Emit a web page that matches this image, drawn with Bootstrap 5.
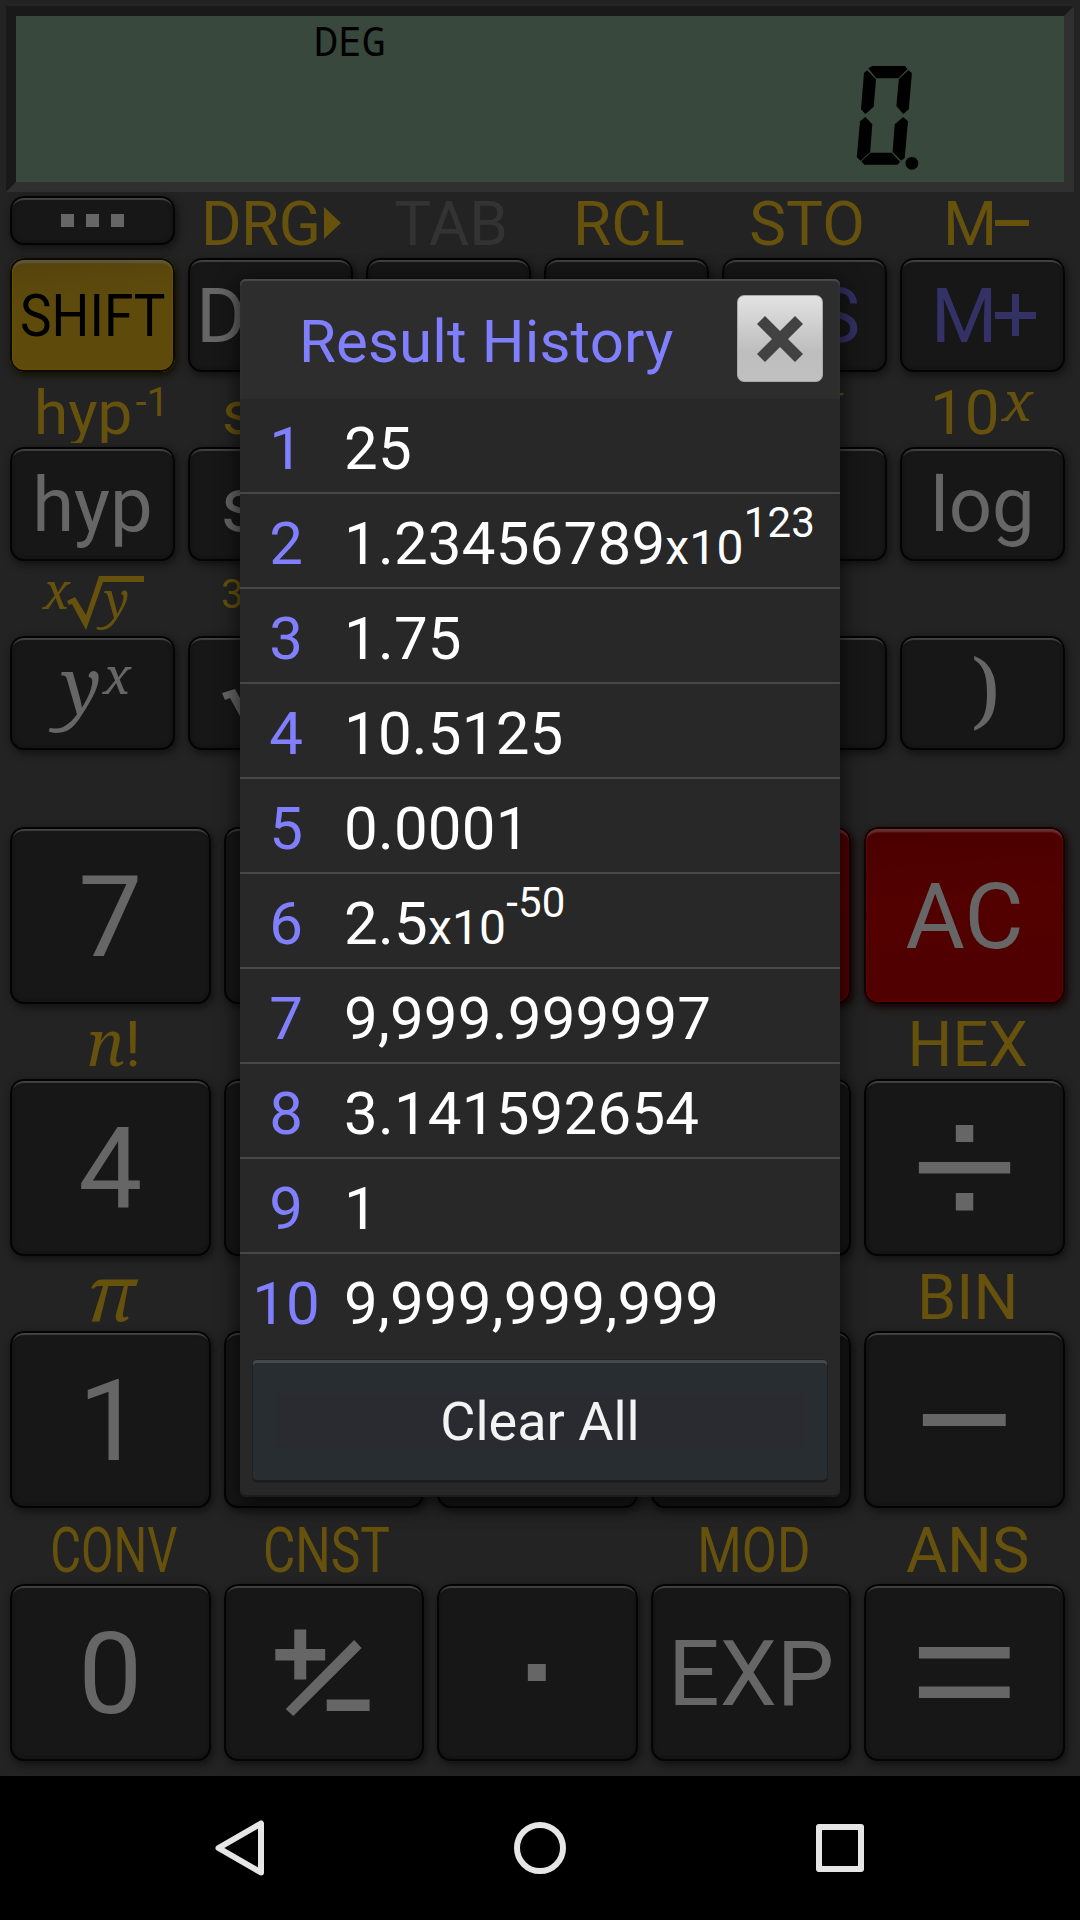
<!DOCTYPE html>
<html lang="en">
<head>
<meta charset="utf-8">
<meta name="viewport" content="width=device-width, initial-scale=1">
<title>Calculator</title>
<link href="https://cdn.jsdelivr.net/npm/bootstrap@5.3.0/dist/css/bootstrap.min.css" rel="stylesheet">
<style>
:root{--gold:#66520c;--ink:#666;--face:#171717}
body{width:1080px;height:1920px;background:#232323;font-family:Roboto,"Liberation Sans",sans-serif;overflow:hidden}
svg{display:block;overflow:visible}
.calc{height:1776px}
.lcd{margin:6px 6px 0;height:186px;border:10px solid;border-color:#191919 #303030 #303030 #191919;background:#38483c}
.krow{display:flex;gap:13px;padding:0 15px 0 10px}
.krow>*{flex:1 1 0;min-width:0}
.key{position:static;border:0;border-radius:14px;padding:0;height:114px;line-height:117px;font-size:76px;color:var(--ink);background:var(--face);white-space:nowrap;
 box-shadow:inset 0 0 0 2px #040404,inset 0 4px 1px 0 #424242,inset 0 0 3px 3px #131313,2px 3px 7px 1px #141414;text-align:center;cursor:pointer}
.key svg{width:100%;height:100%}
.big{height:177px;line-height:181px;font-size:114px}
.mid{font-size:91px}
.key.menu{height:49px;margin-top:4px}
.key.gold{background:linear-gradient(175deg,#54430d,#5e4b0c 40%,#5e4a0a);color:#000;font-size:59px;line-height:115px;
 box-shadow:inset 0 0 0 2px #0c0a02,inset 0 5px 2px 0 #5f573c,inset 0 0 2px 3px #684f04,2px 3px 7px 1px #141205}
.key.red{background:linear-gradient(175deg,#4a0000,#520000 40%,#500000);
 box-shadow:inset 0 0 0 2px #120000,inset 0 5px 2px 0 #6a3232,inset 0 0 2px 3px #600000,2px 3px 7px 1px #160606}
.leg{height:71px;margin-bottom:4px;overflow:hidden;line-height:82px;font-size:62px;color:var(--gold);text-align:center;white-space:nowrap}
.leg svg{width:100%;height:100%;overflow:hidden}
.legtop{height:66px;line-height:64px;margin:0;text-indent:5px}
.legbig{font-size:63px;line-height:83px;text-indent:6px}
.narrow{display:inline-block;transform:scaleX(var(--sx));margin:0 -40px;text-indent:0}
.raise{font-size:40px;position:relative;top:-18px;line-height:1;margin-left:3px}
.it{font-family:"Noto Serif","Droid Serif","DejaVu Serif",serif;font-style:italic}
.dlg{position:absolute;left:240px;top:279px;width:600px;height:1218px;background:#282828;border-radius:6px;box-shadow:inset 0 2px 1px #4a4a4a,inset 0 -2px 1px #1c1c1c,0 4px 22px 2px rgba(0,0,0,.65);color:#fff;font-size:60px}
.dhead{height:120px;padding:0 17px 0 59px;background:#2d2d2d;color:#8080ff;border-radius:6px 6px 0 0;box-shadow:inset 0 2px 1px #4a4a4a}
.dhead h1{font-size:60px;font-weight:400;line-height:116px;padding-top:5px;margin:0;letter-spacing:.12px}
.xbtn{width:86px;height:87px;margin-top:-1px;border-radius:7px;border:1px solid #a8a8a8;background:linear-gradient(#e2e2e2,#bebebe 65%,#c0c0c0);padding:0}
.hist{height:95px;line-height:99px;border-bottom:2px solid #484848;margin:0}
.hist:last-child{border-color:transparent}
.num{width:92px;text-align:center;color:#8080ff}
.val{padding-left:12px;white-space:nowrap;letter-spacing:.2px}
.ten{font-size:48px}
.pow{font-size:42px;position:relative;top:-27px;line-height:1}
.clr{display:block;width:576px;height:124px;margin:10px 12px 0;border:0;border-radius:5px;padding:0;font-size:54px;line-height:123px;color:#f3f3f3;background:linear-gradient(#292b30,#292b30) center/530px 54px no-repeat #282d31;box-shadow:inset 0 0 0 1px #1f2123,inset 0 4px 0 #46494c,inset 0 -3px 0 #1b1c1d}
.navb{height:144px;background:#000}
</style>
<script src="https://cdn.jsdelivr.net/npm/bootstrap@5.3.0/dist/js/bootstrap.bundle.min.js"></script>
</head>
<body>
<main class="calc d-flex flex-column">
  <div class="lcd">
    <svg width="1048" height="166" viewBox="16 16 1048 166" role="img" aria-label="0.">
      <text x="314" y="56" font-size="40" textLength="72" lengthAdjust="spacingAndGlyphs" font-family="'Noto Sans Mono','DejaVu Sans Mono',monospace">DEG</text>
      <path d="M868.2 68.3 872.3 66H905L907.4 69 898.5 78.3H876.4ZM867.1 70.3 876 79.3 873.7 106.7 865.4 114 861 109.3 864 73ZM908.5 70 911.9 73.3 908.8 109.3 903.3 114 896.4 106 898.8 79.3ZM865.4 117 872.3 124.3 870.2 152 860.6 160.7 856.8 157.3 860 121.3ZM903.3 117 908 121.3 904.7 158 901.2 160.7 892.6 152 894.7 124.3ZM870.6 152.7H891.6L900.2 162 897.4 164.7H864.4L861.3 161.3Z"/>
      <circle cx="911.9" cy="163.3" r="6.4"/>
    </svg>
  </div>

  <div class="krow">
    <button class="key menu" aria-label="Menu"><svg viewBox="10 196 165 49" fill="#666"><path d="M61 214h13v13h-13zM86 214h13v13h-13zM111 214h13v13h-13z"/></svg></button>
    <div class="leg legtop"><svg viewBox="188 192 165 66" fill="#66520c"><text x="201" y="245" font-size="62" textLength="120" style="text-indent:0">DRG</text><path d="M324 207 341 223 324 239Z"/></svg></div>
    <div class="leg legtop" style="color:#333">TAB</div>
    <div class="leg legtop">RCL</div>
    <div class="leg legtop">STO</div>
    <div class="leg legtop"><svg viewBox="900 192 165 66" fill="#66520c"><text x="943" y="245" font-size="62">M</text><path d="M995 220h34v6h-34z"/></svg></div>
  </div>
  <div class="krow">
    <button class="key gold"><span class="narrow" style="--sx:.9">SHIFT</span></button>
    <button class="key">DRG</button><button class="key"></button><button class="key"></button>
    <button class="key" style="color:#333166">MS</button>
    <button class="key" aria-label="M+"><svg viewBox="900 258 165 114" fill="#333166"><text x="931" y="342" font-size="76">M</text><path d="M995 312h17v-18h7v18h17v7h-17v17h-7v-17h-17z"/></svg></button>
  </div>

  <div class="krow">
    <div class="leg" style="text-indent:18px">hyp<span class="raise">-1</span></div>
    <div class="leg"><svg viewBox="188 372 165 71" fill="#66520c"><text x="222" y="434" font-size="62">sin</text><text x="306" y="416" font-size="40">-1</text></svg></div>
    <div class="leg"></div><div class="leg"></div>
    <div class="leg"><svg viewBox="722 372 165 71" fill="#66520c"><text class="it" x="812" y="421" font-size="52" textLength="31" lengthAdjust="spacingAndGlyphs">x</text></svg></div>
    <div class="leg"><svg viewBox="900 372 165 71" fill="#66520c"><text x="930" y="434" font-size="62">10</text><text class="it" x="1002" y="421" font-size="54" textLength="31" lengthAdjust="spacingAndGlyphs">x</text></svg></div>
  </div>
  <div class="krow">
    <button class="key">hyp</button><button class="key">sin</button><button class="key"></button><button class="key"></button><button class="key"></button><button class="key">log</button>
  </div>

  <div class="krow">
    <div class="leg"><svg viewBox="10 561 165 71" fill="#66520c"><text class="it" x="43" y="609" font-size="50" textLength="27" lengthAdjust="spacingAndGlyphs">x</text><path d="M67 601 75 597 86 615 99 576H144V582H103L86 630 72 604 69 605Z"/><text class="it" x="104" y="618" font-size="50" textLength="25" lengthAdjust="spacingAndGlyphs">y</text></svg></div>
    <div class="leg"><svg viewBox="188 561 165 71" fill="#66520c"><text x="221" y="608" font-size="40">3</text></svg></div>
    <div class="leg"></div><div class="leg"></div><div class="leg"></div><div class="leg"></div>
  </div>
  <div class="krow">
    <button class="key"><svg viewBox="10 636 165 114" fill="#666"><text class="it" x="61" y="714" font-size="78" textLength="40" lengthAdjust="spacingAndGlyphs">y</text><text class="it" x="103" y="694" font-size="51" textLength="28" lengthAdjust="spacingAndGlyphs">x</text></svg></button>
    <button class="key" aria-label="Square root"><svg viewBox="188 636 165 114" fill="#666"><path d="M222 693 235 689 252 720 268 668H300V676H274L252 738 230 698 225 700Z"/></svg></button>
    <button class="key"></button><button class="key"></button><button class="key"></button>
    <button class="key"><svg viewBox="900 636 165 114" fill="#666"><text x="971.500" y="719.500" font-size="84" textLength="29" lengthAdjust="spacingAndGlyphs" font-family="'Noto Serif','DejaVu Serif',serif">)</text></svg></button>
  </div>

  <div class="krow" style="margin-top:77px">
    <button class="key big">7</button><button class="key big"></button><button class="key big"></button><button class="key big red"></button><button class="key big mid red">AC</button>
  </div>
  <div class="krow">
    <div class="leg"><svg viewBox="10 1004 201 71" fill="#66520c"><text class="it" x="87" y="1066" font-size="64" textLength="38" lengthAdjust="spacingAndGlyphs">n</text><text x="125" y="1066" font-size="63">!</text></svg></div>
    <div class="leg"></div><div class="leg"></div><div class="leg"></div><div class="leg legbig" style="line-height:81px">HEX</div>
  </div>
  <div class="krow">
    <button class="key big">4</button><button class="key big"></button><button class="key big"></button><button class="key big"></button>
    <button class="key big" aria-label="Divide"><svg viewBox="864 1079 201 177" fill="#666"><path d="M956 1125h17.500v17h-17.500zM919 1162h91.500v11.500h-91.500zM956 1193h17.500v17.500h-17.500z"/></svg></button>
  </div>
  <div class="krow">
    <div class="leg"><svg viewBox="10 1256 201 71" fill="#66520c"><text class="it" x="87" y="1321" font-size="78" textLength="49" lengthAdjust="spacingAndGlyphs">π</text></svg></div>
    <div class="leg"></div><div class="leg"></div><div class="leg"></div><div class="leg legbig">BIN</div>
  </div>
  <div class="krow">
    <button class="key big">1</button><button class="key big"></button><button class="key big"></button><button class="key big"></button>
    <button class="key big" aria-label="Minus"><svg viewBox="864 1331 201 177" fill="#666"><path d="M923 1414h83v12h-83z"/></svg></button>
  </div>
  <div class="krow" style="margin-top:1px">
    <div class="leg legbig"><span class="narrow" style="--sx:.75">CONV</span></div>
    <div class="leg legbig"><span class="narrow" style="--sx:.79">CNST</span></div>
    <div class="leg"></div>
    <div class="leg legbig"><span class="narrow" style="--sx:.81">MOD</span></div>
    <div class="leg legbig">ANS</div>
  </div>
  <div class="krow">
    <button class="key big">0</button>
    <button class="key big" aria-label="Plus minus"><svg viewBox="223.600 1584 201 177" fill="#666"><path d="M275 1649h19v-19.500h12v19.500h19v11.500h-19v19h-12v-19h-19zM285.500 1709 354 1640 361.500 1648 293 1716zM326.500 1699.500h43v11.500h-43z"/></svg></button>
    <button class="key big" aria-label="Point"><svg viewBox="437 1584 201 177" fill="#666"><path d="M528 1664h18v17h-18z"/></svg></button>
    <button class="key big mid">EXP</button>
    <button class="key big" aria-label="Equals"><svg viewBox="864 1584 201 177" fill="#666"><path d="M919 1647h91v11.500h-91zM919 1686.500h91v11.500h-91z"/></svg></button>
  </div>
</main>

<nav class="navb" aria-label="System">
  <svg width="1080" height="144" viewBox="0 1776 1080 144" fill="none" stroke="#e6e6e6" stroke-width="6" stroke-linejoin="round">
    <path d="M218.500 1848 261 1823.500V1872.500Z"/><circle cx="540" cy="1848" r="23"/><rect x="819" y="1827" width="42" height="42"/>
  </svg>
</nav>

<section class="dlg" role="dialog" aria-label="Result History">
  <header class="dhead d-flex align-items-center justify-content-between">
    <h1>Result History</h1>
    <button class="xbtn" aria-label="Close"><svg width="84" height="85" viewBox="738 296 84 85"><path d="M757 324 765 316 780 331 795 316 803 324 788 339 803 354 795 362 780 347 765 362 757 354 772 339Z" fill="#424242"/></svg></button>
  </header>
  <div class="d-flex flex-column">
    <div class="hist d-flex"><div class="num">1</div><div class="val">25</div></div>
    <div class="hist d-flex"><div class="num">2</div><div class="val">1.23456789<span class="ten">x10</span><span class="pow">123</span></div></div>
    <div class="hist d-flex"><div class="num">3</div><div class="val">1.75</div></div>
    <div class="hist d-flex"><div class="num">4</div><div class="val">10.5125</div></div>
    <div class="hist d-flex"><div class="num">5</div><div class="val">0.0001</div></div>
    <div class="hist d-flex"><div class="num">6</div><div class="val">2.5<span class="ten">x10</span><span class="pow">-50</span></div></div>
    <div class="hist d-flex"><div class="num">7</div><div class="val">9,999.999997</div></div>
    <div class="hist d-flex"><div class="num">8</div><div class="val">3.141592654</div></div>
    <div class="hist d-flex"><div class="num">9</div><div class="val">1</div></div>
    <div class="hist d-flex"><div class="num">10</div><div class="val">9,999,999,999</div></div>
  </div>
  <button class="clr">Clear All</button>
</section>
</body>
</html>
